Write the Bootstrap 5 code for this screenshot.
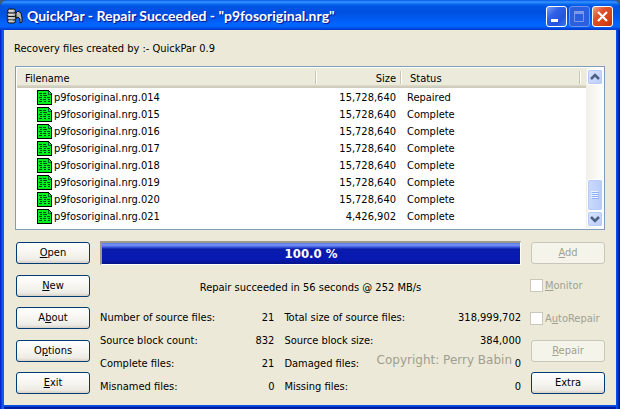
<!DOCTYPE html>
<html lang="en">
<head>
<meta charset="utf-8">
<meta name="viewport" content="width=device-width, initial-scale=1">
<title>QuickPar</title>
<link href="https://cdn.jsdelivr.net/npm/bootstrap@5.3.0/dist/css/bootstrap.min.css" rel="stylesheet">
<style>
body { font-family: "DejaVu Sans Condensed", "DejaVu Sans", sans-serif; font-size: 11px; line-height: 17px; color: #000; background: #3a5a78; }
.app-window { border-radius: 8px 8px 0 0; padding: 0 4px 4px; background: linear-gradient(90deg, #0019cf 0, #0831d9 1px, #166aee 3px, #0855dd 4px, #0855dd calc(100% - 4px), #0048f1 calc(100% - 3px), #001ea0 calc(100% - 1px), #00138c); overflow: hidden; }
.title-bar { height: 30px; margin: 0 -4px; padding: 2px 7px 0 6px; background: linear-gradient(#0058e6 0, #3a93ff 2px, #0a6bf2 4px, #0055e5 6px, #0050e0 12px, #0058ee 18px, #0066ff 24px, #0062fa 27px, #003dd7 29px, #0040c8 30px); }
.title-text { font: 700 14px/20px Lato, "Open Sans", sans-serif; color: #fff; text-shadow: 1px 1px 1px #0f1089; }
.cap-btn { width: 21px; height: 21px; border: 1px solid #fff; border-radius: 3px; background: linear-gradient(135deg, #7d9ff5, #2f60e6 35%, #2454dd 70%, #3a78f5); }
.cap-btn.dim { border-color: #6f93ea; background: #2a60df; }
.cap-btn.shut { background: linear-gradient(135deg, #f0a088, #e0512d 35%, #d54016 75%, #b8330c); }
.cap-group { gap: 2px; }
.client { background: #ece9d8; padding: 10px 11px 7px 10px; box-shadow: 0 1px #0855dd, 0 2px #0a3fd8, 0 4px #001ea0; }
.intro { margin-bottom: 9px; }
.list-box { margin-left: 1px; border: 1px solid #7f9db9; background: #fff; padding: 1px 1px 4px; }
.file-table { table-layout: fixed; border-collapse: separate; border-spacing: 0; }
.file-table th { position: relative; height: 21px; padding: 1px 6px 0 8px; font-weight: 400; line-height: 16px; background: linear-gradient(#ebeadb 0, #ebeadb 17px, #e2decd 17px, #d6d2c2 18px, #cbc7b8 20px, #fff 20px); }
.file-table th::after { content: ""; position: absolute; right: 0; top: 3px; width: 2px; height: 13px; background: linear-gradient(90deg, #c7c5b2 1px, #fff 1px); }
.file-table th:last-child::after { display: none; }
.file-table td { height: 17px; padding: 0 6px; line-height: 17px; white-space: nowrap; }
.file-table td:first-child { padding-left: 20px; }
.file-table td:nth-child(3) { padding-left: 5px; }
.file-icon { width: 15px; height: 15px; margin-right: 2px; display: block; }
.col-size { width: 85px; }
.col-status { width: 179px; }
.col-rest { width: 5px; }
.scroll-track { width: 17px; margin-bottom: -3px; padding: 1px 0 1px 1px; background: linear-gradient(90deg, #f0efe8, #fefefb); }
.scroll-btn { width: 16px; height: 16px; border: 1px solid #fff; border-radius: 3px; outline: 1px solid #b8cbf6; outline-offset: -2px; background: linear-gradient(135deg, #dce6ff, #b9cbf8); }
.scroll-thumb { height: 32px; background: linear-gradient(90deg, #cbdaff, #b9cbf8); }
.xp-btn { width: 100%; height: 22px; padding: 0; font-size: 11px; line-height: 18px; color: #000; border: 1px solid #003c74; border-radius: 3px; background: linear-gradient(#fff, #f4f3ee 60%, #ecebe5 85%, #d6d0c5); }
.xp-btn:hover { border-color: #003c74; background: #faf8f3; }
.xp-btn:disabled { color: #a1a192; border-color: #c9c7ba; background: #f5f4ea; opacity: 1; }
.side { width: 74px; height: 152px; }
.lower { padding: 12px 0 0 2px; gap: 10px; }
.progress-well { height: 24px; margin-top: -1px; border: 1px solid; border-color: #9d9a8c #fff #fff #9d9a8c; border-top-width: 2px; border-left-width: 2px; border-radius: 0; background: #ece9d8; }
.progress-fill { font-size: 13px; font-weight: 700; background: linear-gradient(#5575e6 0, #7d95f5 2px, #3f5cdb 4px, #0a1cab 6px, #0819b4 16px, #06128a); }
.result { padding-top: 14px; margin-bottom: 10px; }
.stats-grid { display: grid; grid-template-columns: 174fr 236fr; column-gap: 10px; }
.stat { height: 23px; line-height: 23px; margin: 0; }
.stat dt { font-weight: 400; }
.stat dd { margin: 0; }
.credit { position: absolute; right: 9px; top: -3px; font: 12px/23px "DejaVu Sans", sans-serif; color: #a19e90; white-space: nowrap; }
.tick { height: 22px; gap: 2px; margin-left: -1px; color: #a1a192; }
.tick input { appearance: none; flex: none; width: 13px; height: 13px; margin: 0; border: 1px solid #cac8bb; background: #fff; }
</style>
</head>
<body>
<main class="app-window min-vh-100 d-flex flex-column">
  <header class="title-bar d-flex align-items-center">
    <svg class="flex-shrink-0" width="17" height="18" viewBox="0 0 17 18" aria-hidden="true">
      <g fill="#b8b8b8" stroke="#111" stroke-width="1">
        <rect x="1.5" y="12" width="8" height="4" rx="2"/><rect x="1" y="9" width="9" height="4" rx="2"/><rect x="1" y="5.5" width="9" height="4" rx="2"/><rect x="1.5" y="2" width="8" height="4" rx="2"/>
        <path d="M10 6 12 4l3 2 1 5v4l-2 1v-4l-2-2-2 1z"/>
      </g>
      <path d="M3 4h4M3 7.500h4M3 11h4M3 14h4" stroke="#e6e6e6"/>
    </svg>
    <h1 class="title-text m-0 ms-1 flex-grow-1 text-truncate">QuickPar - Repair Succeeded - "p9fosoriginal.nrg"</h1>
    <div class="cap-group d-flex">
      <button class="cap-btn p-0 d-flex" type="button" aria-label="Minimize"><svg width="19" height="19"><path d="M4 12h7v3H4z" fill="#fff"/></svg></button>
      <button class="cap-btn dim p-0 d-flex" type="button" aria-label="Maximize" disabled><svg width="19" height="19"><path d="M4.500 5v9.500h9V5" fill="none" stroke="#7d98e9"/><path d="M4 4h10v3H4z" fill="#7d98e9"/></svg></button>
      <button class="cap-btn shut p-0 d-flex" type="button" aria-label="Close"><svg width="19" height="19"><path d="m5 5 9 9m0-9-9 9" stroke="#fff" stroke-width="2.200"/></svg></button>
    </div>
  </header>
  <div class="client flex-grow-1">
    <p class="intro">Recovery files created by :- QuickPar 0.9</p>
    <section class="list-box d-flex">
      <table class="file-table flex-grow-1">
        <colgroup><col><col class="col-size"><col class="col-status"><col class="col-rest"></colgroup>
        <thead><tr><th>Filename</th><th class="text-end">Size</th><th>Status</th><th class="p-0"></th></tr></thead>
        <tbody id="files"></tbody>
      </table>
      <div class="scroll-track d-flex flex-column">
        <button class="scroll-btn p-0 d-flex" type="button" aria-label="Scroll up"><svg width="14" height="14"><path d="m3 9 4-4 4 4" fill="none" stroke="#4d6185" stroke-width="2.500"/></svg></button>
        <div class="scroll-btn scroll-thumb mt-auto d-flex align-items-center justify-content-center"><svg width="8" height="9"><path d="M0 .5h7M0 2.500h7M0 4.500h7M0 6.500h7" stroke="#eef4fe"/><path d="M1 1.500h7M1 3.500h7M1 5.500h7M1 7.500h7" stroke="#8cb0f8"/></svg></div>
        <button class="scroll-btn p-0 d-flex" type="button" aria-label="Scroll down"><svg width="14" height="14"><path d="m3 5 4 4 4-4" fill="none" stroke="#4d6185" stroke-width="2.500"/></svg></button>
      </div>
    </section>
    <section class="lower d-flex">
      <div class="side d-flex flex-column justify-content-between flex-shrink-0">
        <button class="btn xp-btn" type="button"><u>O</u>pen</button>
        <button class="btn xp-btn" type="button"><u>N</u>ew</button>
        <button class="btn xp-btn" type="button">A<u>b</u>out</button>
        <button class="btn xp-btn" type="button">O<u>p</u>tions</button>
        <button class="btn xp-btn" type="button"><u>E</u>xit</button>
      </div>
      <div class="flex-grow-1">
        <div class="progress progress-well" role="progressbar" aria-valuenow="100" aria-valuemin="0" aria-valuemax="100" aria-label="Repair">
          <div class="progress-bar progress-fill" style="width:100%">100.0 %</div>
        </div>
        <p class="result text-center">Repair succeeded in 56 seconds @ 252 MB/s</p>
        <div class="stats-grid">
          <dl class="stat d-flex justify-content-between"><dt>Number of source files:</dt><dd>21</dd></dl>
          <dl class="stat d-flex justify-content-between"><dt>Total size of source files:</dt><dd>318,999,702</dd></dl>
          <dl class="stat d-flex justify-content-between"><dt>Source block count:</dt><dd>832</dd></dl>
          <dl class="stat d-flex justify-content-between"><dt>Source block size:</dt><dd>384,000</dd></dl>
          <dl class="stat d-flex justify-content-between"><dt>Complete files:</dt><dd>21</dd></dl>
          <dl class="stat d-flex justify-content-between position-relative"><dt>Damaged files:</dt><dd>0</dd><dd class="credit">Copyright: Perry Babin</dd></dl>
          <dl class="stat d-flex justify-content-between"><dt>Misnamed files:</dt><dd>0</dd></dl>
          <dl class="stat d-flex justify-content-between"><dt>Missing files:</dt><dd>0</dd></dl>
        </div>
      </div>
      <div class="side d-flex flex-column justify-content-between flex-shrink-0">
        <button class="btn xp-btn" type="button" disabled><u>A</u>dd</button>
        <label class="tick d-flex align-items-center" for="monitor"><input type="checkbox" id="monitor" disabled><span><u>M</u>onitor</span></label>
        <label class="tick d-flex align-items-center" for="auto"><input type="checkbox" id="auto" disabled><span>A<u>u</u>toRepair</span></label>
        <button class="btn xp-btn" type="button" disabled><u>R</u>epair</button>
        <button class="btn xp-btn" type="button">Extra</button>
      </div>
    </section>
  </div>
</main>
<script src="https://cdn.jsdelivr.net/npm/bootstrap@5.3.0/dist/js/bootstrap.bundle.min.js"></script>
<script>
const icon = '<svg class="file-icon" viewBox="0 0 15 15" shape-rendering="crispEdges" aria-hidden="true"><path d="M.5.500h11l3 3v11H.5z" fill="#00f020" stroke="#000"/><path d="M11 1v3h3" fill="none" stroke="#063"/><path d="M2 3.500h3m1 0h3M3 5.500h2m1 0h4M2 7.500h3m2 0h2m1 0h3M3 9.500h2m1 0h3m2 0h2M2 11.500h3m2 0h2m2 0h2" stroke="#042"/></svg>';
const files = [["014","15,728,640","Repaired"],["015","15,728,640","Complete"],["016","15,728,640","Complete"],["017","15,728,640","Complete"],["018","15,728,640","Complete"],["019","15,728,640","Complete"],["020","15,728,640","Complete"],["021","4,426,902","Complete"]];
document.getElementById("files").innerHTML = files.map(([n, size, status]) =>
  `<tr><td><span class="d-flex align-items-center">${icon}p9fosoriginal.nrg.${n}</span></td><td class="text-end">${size}</td><td>${status}</td><td class="p-0"></td></tr>`).join("");
</script>
</body>
</html>
